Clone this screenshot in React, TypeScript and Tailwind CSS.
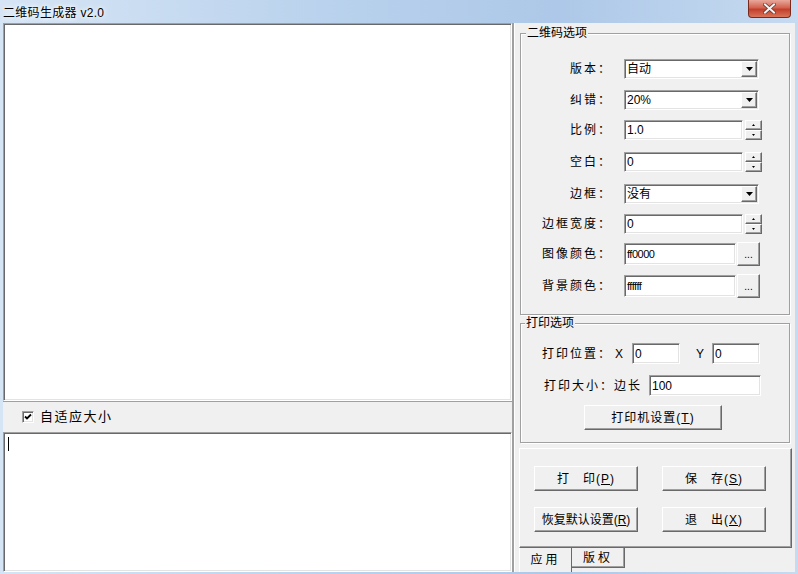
import React from 'react'

const raised =
  'border border-t-white border-l-white border-r-[#696969] border-b-[#696969] shadow-[inset_-1px_-1px_0_#a0a0a0] bg-[#f0f0f0]'
const sunken =
  'border border-t-[#a0a0a0] border-l-[#a0a0a0] border-r-white border-b-white shadow-[inset_1px_1px_0_#696969,inset_-1px_-1px_0_#e3e3e3] bg-white'
const groupBox =
  'border border-[#a0a0a0] shadow-[inset_1px_1px_0_white,1px_1px_0_white]'

function DownArrow() {
  return (
    <svg width="7" height="4" viewBox="0 0 7 4">
      <path d="M0 0h7L3.5 4z" fill="#000" />
    </svg>
  )
}

function Combo({ value }: { value: string }) {
  return (
    <div className={`${sunken} flex h-[20px] w-[135px] items-center`}>
      <span className="flex-1 pl-[2px] text-[12px] leading-none">{value}</span>
      <span className={`${raised} mr-[1px] flex h-[16px] w-[16px] items-center justify-center`}>
        <DownArrow />
      </span>
    </div>
  )
}

function Spin({ value }: { value: string }) {
  return (
    <div className="flex items-center gap-[2px]">
      <div className={`${sunken} flex h-[20px] w-[119px] items-center pl-[2px] text-[12px]`}>{value}</div>
      <div className="flex h-[20px] w-[17px] flex-col">
        <span className={`${raised} flex h-[10px] items-center justify-center`}>
          <svg width="3" height="2" viewBox="0 0 3 2">
            <path d="M1.5 0L3 2H0z" fill="#000" />
          </svg>
        </span>
        <span className={`${raised} flex h-[10px] items-center justify-center`}>
          <svg width="3" height="2" viewBox="0 0 3 2">
            <path d="M0 0h3L1.5 2z" fill="#000" />
          </svg>
        </span>
      </div>
    </div>
  )
}

function ColorField({ value }: { value: string }) {
  return (
    <div className="flex items-center gap-[1px]">
      <div className={`${sunken} flex h-[22px] w-[112px] items-center pl-[2px] text-[11px] tracking-[-0.5px]`}>
        {value}
      </div>
      <button className={`${raised} flex h-[24px] w-[23px] items-end justify-center pb-[5px] text-[10px] leading-none`}>
        ...
      </button>
    </div>
  )
}

function Row({ label, mt, children }: { label: string; mt: string; children: React.ReactNode }) {
  return (
    <div className={`flex items-center ${mt}`}>
      <span className="w-[91px] text-right text-[12px] tracking-[2px]">{label}</span>
      <div className="ml-[12px]">{children}</div>
    </div>
  )
}

function Btn({ children, w, h = 'h-[25px]' }: { children: React.ReactNode; w: string; h?: string }) {
  return (
    <button className={`${raised} ${w} ${h} flex items-center justify-center text-[12px] tracking-[1px]`}>
      {children}
    </button>
  )
}

export default function App() {
  return (
    <div className="flex h-[574px] w-[798px] flex-col bg-[linear-gradient(90deg,#d6e5f5_0%,#b7d0ec_45%,#adc8e8_70%,#c6daf0_100%)] font-['Liberation_Sans','Noto_Sans_CJK_SC',sans-serif] text-black">
      {/* title bar */}
      <div className="flex h-[24px] items-start justify-between">
        <span className="ml-[3px] mt-[4px] text-[12px] tracking-[0.3px] [text-shadow:0_0_6px_#fff,0_0_4px_#fff]">二维码生成器 v2.0</span>
        <div className="mr-[7px] flex h-[18px] w-[43px] items-center justify-center rounded-b-[4px] border border-t-0 border-[#7a2a1d] bg-[linear-gradient(180deg,#e9a99b_0%,#d2634f_45%,#c2402b_55%,#d9745a_100%)]">
          <svg width="13" height="11" viewBox="0 0 13 11">
            <path d="M2 1.5l9 8M11 1.5l-9 8" stroke="#6b3a33" strokeWidth="3.6" strokeLinecap="square" />
            <path d="M2 1.5l9 8M11 1.5l-9 8" stroke="#f4f4f4" strokeWidth="2" strokeLinecap="square" />
          </svg>
        </div>
      </div>

      <div className="flex flex-1 pb-[2px] pl-[3px] pr-[3px]">
        {/* left side */}
        <div className="flex w-[510px] shrink-0 flex-col border-r border-[#a0a0a0] bg-[#f0f0f0]">
          <div className={`${sunken} h-[378px]`} />
          <div className="flex h-[31px] items-center gap-[6px] border-t border-[#a0a0a0] pl-[19px]">
            <span className={`${sunken} flex h-[12px] w-[12px] items-center justify-center`}>
              <svg width="8" height="8" viewBox="0 0 8 8">
                <path d="M1 3.5l2 2L7 1.5" stroke="#000" strokeWidth="1.8" fill="none" />
              </svg>
            </span>
            <span className="text-[13px] tracking-[1.5px]">自适应大小</span>
          </div>
          <div className={`${sunken} flex-1 pl-[4px] pt-[4px]`}>
            <div className="h-[14px] w-[1px] bg-black" />
          </div>
        </div>

        {/* right side */}
        <div className="flex min-w-0 flex-1 flex-col border-l border-[#a0a0a0] bg-[#f0f0f0] pl-[6px] pr-[2px] pt-[3px] shadow-[inset_1px_0_0_white]">
          <fieldset className={`${groupBox} w-[270px] pb-[16px]`}>
            <legend className="ml-[5px] bg-[#f0f0f0] px-[1px] text-[12px] leading-[14px]">二维码选项</legend>
            <Row label="版本：" mt="mt-[19px]">
              <Combo value="自动" />
            </Row>
            <Row label="纠错：" mt="mt-[11px]">
              <Combo value="20%" />
            </Row>
            <Row label="比例：" mt="mt-[10px]">
              <Spin value="1.0" />
            </Row>
            <Row label="空白：" mt="mt-[12px]">
              <Spin value="0" />
            </Row>
            <Row label="边框：" mt="mt-[12px]">
              <Combo value="没有" />
            </Row>
            <Row label="边框宽度：" mt="mt-[10px]">
              <Spin value="0" />
            </Row>
            <Row label="图像颜色：" mt="mt-[8px]">
              <ColorField value="ff0000" />
            </Row>
            <Row label="背景颜色：" mt="mt-[8px]">
              <ColorField value="ffffff" />
            </Row>
          </fieldset>

          <fieldset className={`${groupBox} mt-[1px] w-[270px] pb-[12px]`}>
            <legend className="ml-[4px] bg-[#f0f0f0] px-[1px] text-[12px] leading-[14px]">打印选项</legend>
            <div className="mt-[13px] flex items-center">
              <span className="w-[91px] text-right text-[12px] tracking-[2px]">打印位置：</span>
              <span className="ml-[3px] w-[17px] text-[12px]">X</span>
              <div className={`${sunken} flex h-[21px] w-[48px] items-center pl-[2px] text-[12px]`}>0</div>
              <span className="ml-[16px] w-[16px] text-[12px]">Y</span>
              <div className={`${sunken} flex h-[21px] w-[48px] items-center pl-[2px] text-[12px]`}>0</div>
            </div>
            <div className="mt-[11px] flex items-center">
              <span className="w-[128px] pl-[23px] text-[12px] tracking-[2px]">打印大小：边长</span>
              <div className={`${sunken} flex h-[21px] w-[112px] items-center pl-[2px] text-[12px]`}>100</div>
            </div>
            <div className="ml-[63px] mt-[9px]">
              <Btn w="w-[138px]">
                打印机设置(<span className="underline">T</span>)
              </Btn>
            </div>
          </fieldset>

          <div className="-ml-[1px] mt-[5px] flex h-[100px] w-[273px] flex-col border border-t-white border-l-white border-r-[#696969] border-b-[#696969] shadow-[inset_-1px_-1px_0_#a0a0a0]">
            <div className="ml-[14px] mt-[17px] grid w-[232px] grid-cols-[104px_104px] gap-x-[24px] gap-y-[16px]">
              <Btn w="w-[104px]">
                打&nbsp;&nbsp;&nbsp;印(<span className="underline">P</span>)
              </Btn>
              <Btn w="w-[104px]">
                保&nbsp;&nbsp;&nbsp;存(<span className="underline">S</span>)
              </Btn>
              <Btn w="w-[104px]">
                <span className="tracking-[0px]">
                  恢复默认设置(<span className="underline">R</span>)
                </span>
              </Btn>
              <Btn w="w-[104px]">
                退&nbsp;&nbsp;&nbsp;出(<span className="underline">X</span>)
              </Btn>
            </div>
          </div>

          <div className="-ml-[1px] flex items-start">
            <div className="flex h-[24px] w-[53px] items-end justify-center border-l border-r border-l-white border-r-[#696969] pb-[3px] text-[12px] tracking-[3px]">
              应用
            </div>
            <div className="flex h-[20px] w-[53px] items-center justify-center border-r border-b border-r-[#696969] border-b-[#696969] text-[12px] tracking-[3px] shadow-[inset_-1px_-1px_0_#a0a0a0]">
              版权
            </div>
          </div>
        </div>
      </div>
    </div>
  )
}
